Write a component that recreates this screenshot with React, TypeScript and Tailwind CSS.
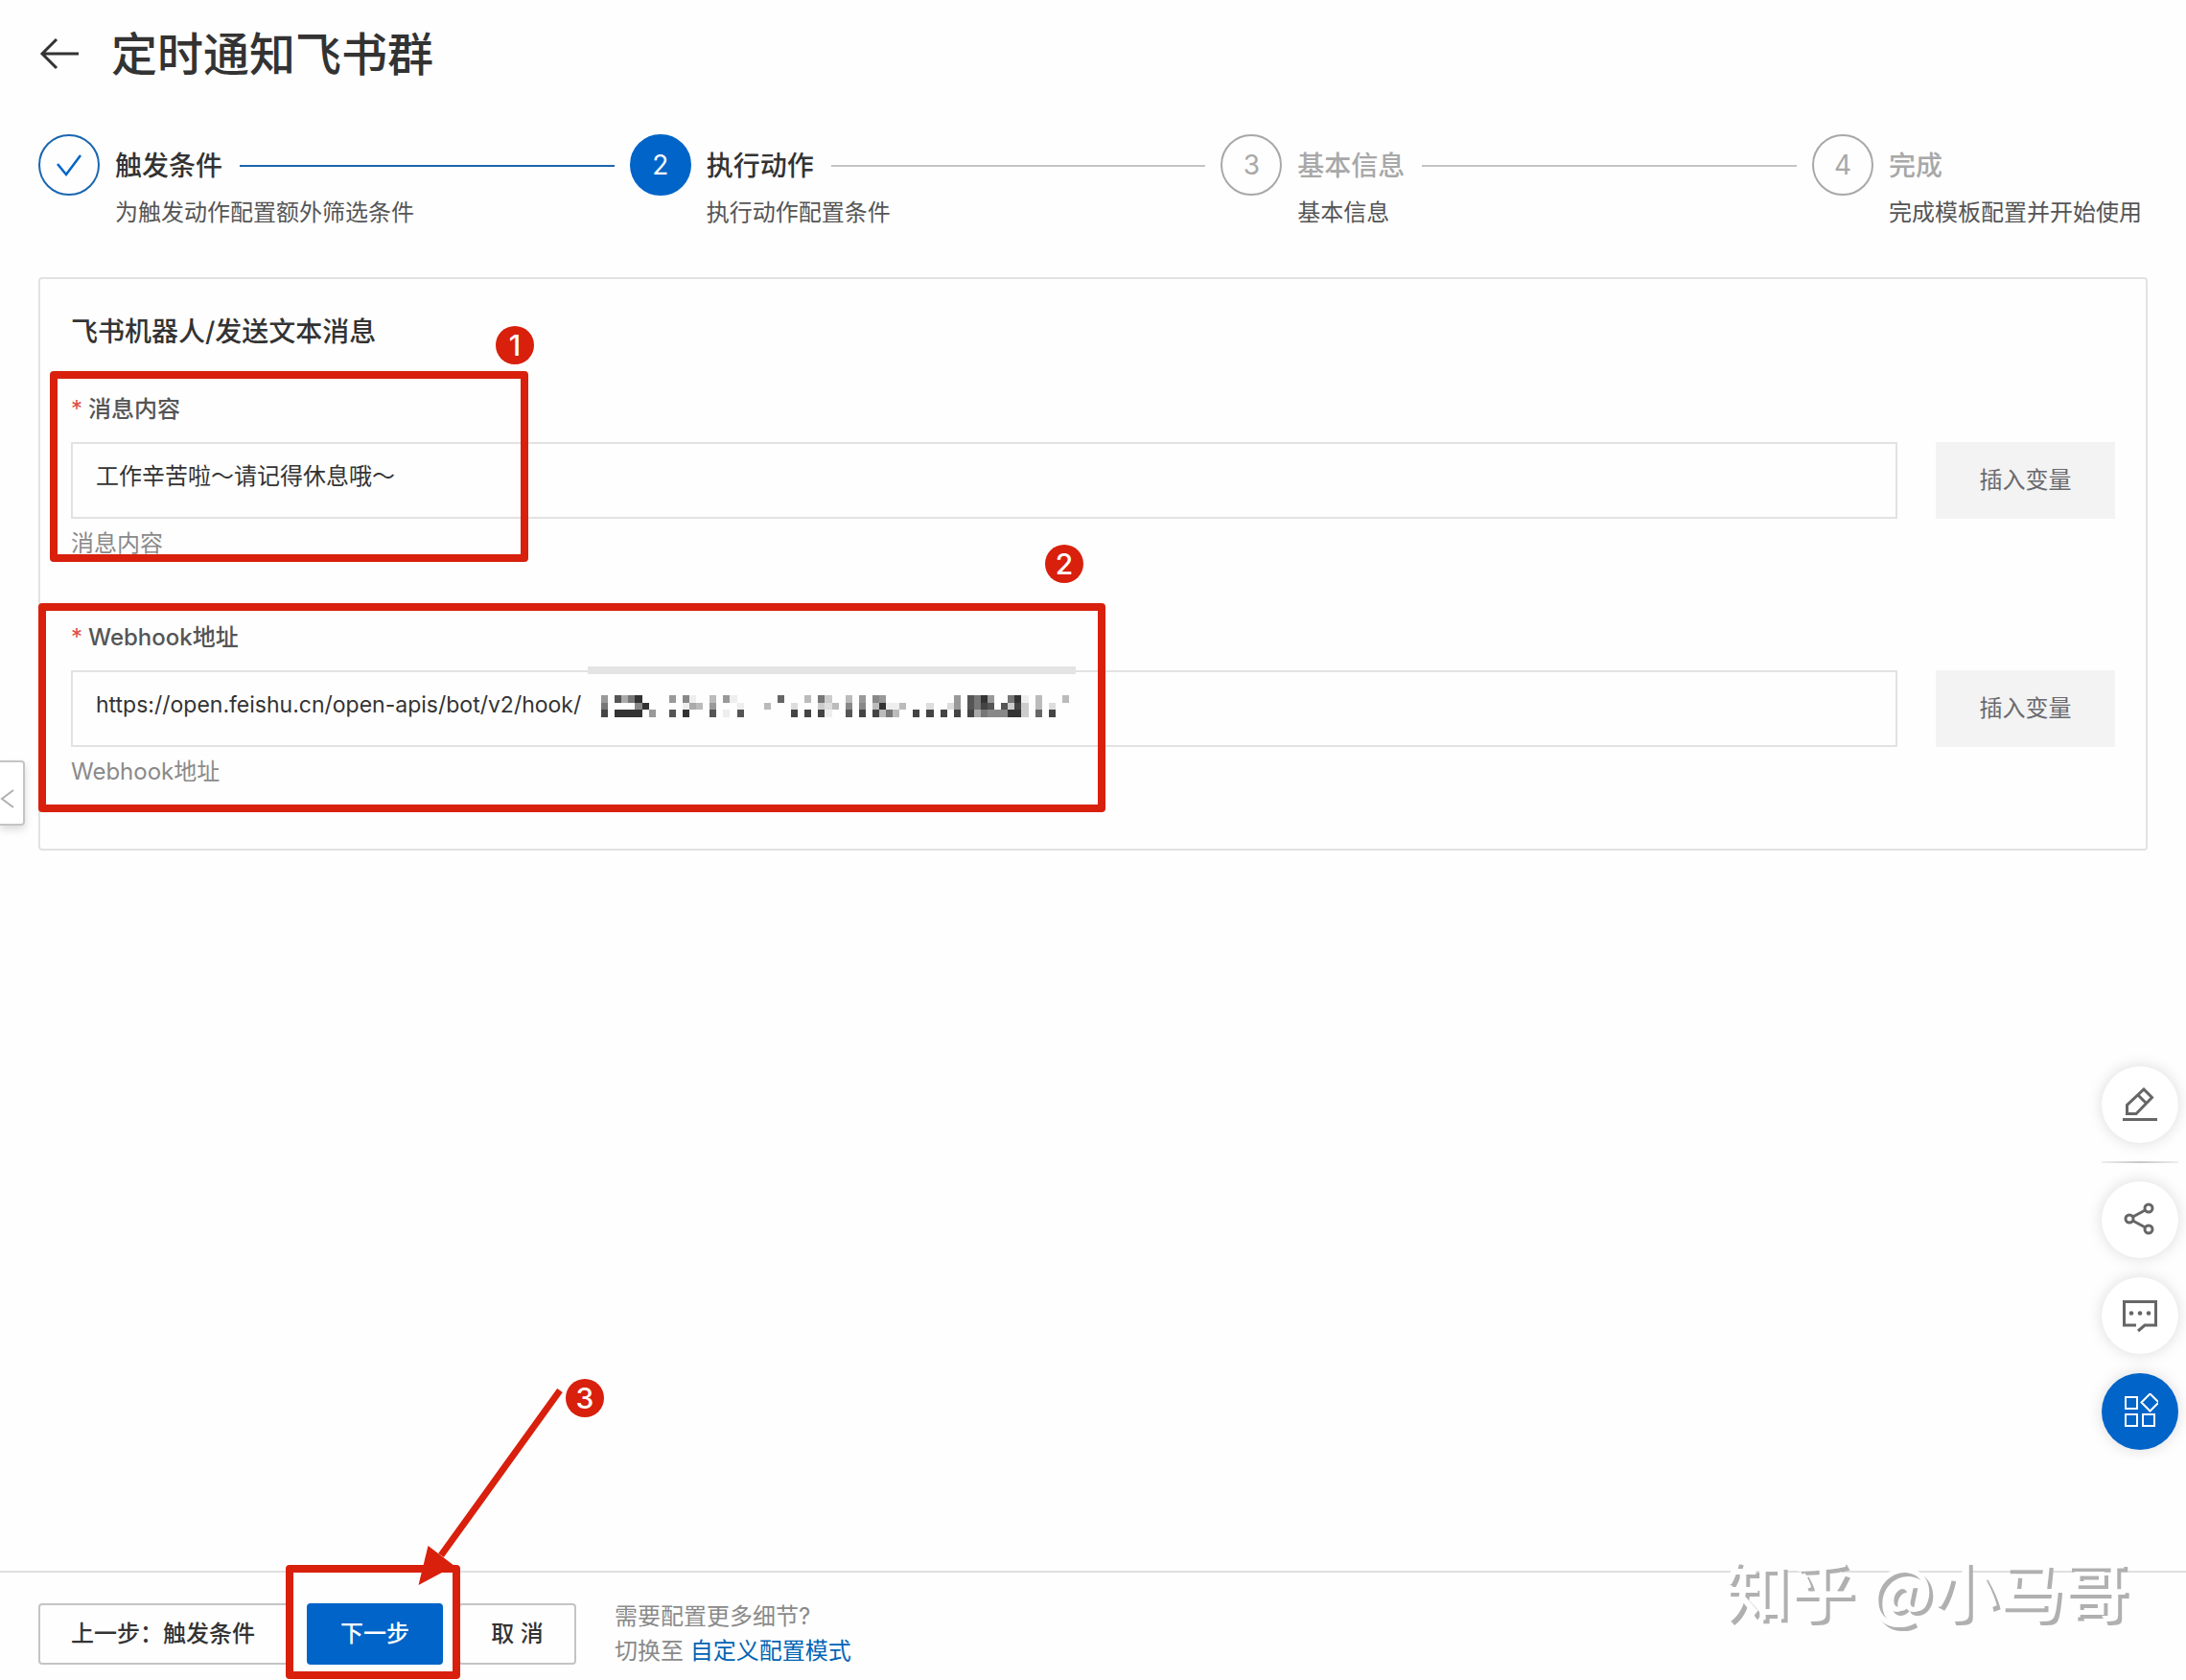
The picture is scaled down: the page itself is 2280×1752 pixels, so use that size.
import type { ReactNode } from "react";

type StepState = "done" | "active" | "todo";

const steps: { title: string; desc: string; state: StepState }[] = [
  { title: "触发条件", desc: "为触发动作配置额外筛选条件", state: "done" },
  { title: "执行动作", desc: "执行动作配置条件", state: "active" },
  { title: "基本信息", desc: "基本信息", state: "todo" },
  { title: "完成", desc: "完成模板配置并开始使用", state: "todo" },
];

const circleStyle: Record<StepState, string> = {
  done: "border-[#1a66b0] text-[#0064c8]",
  active: "border-[#0064c8] bg-[#0064c8] text-white",
  todo: "border-[#a8a8a8] text-[#a8a8a8]",
};

/* Columns of the mosaic: [column, top, middle, bottom]; each letter is a hex grey level. */
const mosaic: [number, string][] = [
  [2, "974"], [4, "5.3"], [5, "a.3"], [6, "7.3"], [7, "383"], [8, ".3."], [9, "..9"],
  [12, "9.5"], [14, "8e3"], [15, "ea."], [16, ".b."], [18, "b95"], [20, "9.e"], [21, "e.."],
  [22, ".e5"], [26, ".b."], [28, "6.."], [30, ".d4"], [32, "b.4"], [34, "7c4"], [35, "cde"],
  [36, ".b."], [38, "b85"], [40, "984"], [42, "8b4"], [43, "93b"], [44, ".e7"], [45, ".eb"],
  [46, ".b."], [48, "..4"], [50, ".d4"], [52, "..4"], [53, ".d."], [54, "994"], [56, "554"],
  [57, "77a"], [58, "347"], [59, "958"], [60, "..8"], [61, ".58"], [62, "7c3"], [63, "343"],
  [64, "ecc"], [66, "bb6"], [68, ".d4"], [70, "b.."],
];

function Mosaic() {
  return (
    <div className="absolute -top-1 left-[539px] h-[76px] w-[509px] border-t-8 border-[#e4e4e4] bg-[#fefefe]">
      <svg
        className="mt-[22px] h-[23px] w-full"
        viewBox="0 0 72 3"
        preserveAspectRatio="none"
        shapeRendering="crispEdges"
        aria-hidden="true"
      >
        {mosaic.flatMap(([col, levels]) =>
          levels.split("").map((l, row) =>
            l === "." ? null : (
              <rect key={`${col}-${row}`} x={col} y={row} width="1" height="1" fill={`#${l}${l}${l}`} />
            ),
          ),
        )}
      </svg>
    </div>
  );
}

function Badge({ n, className }: { n: number; className: string }) {
  return (
    <span
      className={`absolute flex size-10 items-center justify-center rounded-full bg-[#d8200d] text-[30px] leading-none font-medium text-white ${className}`}
    >
      {n}
    </span>
  );
}

function Field({
  id,
  label,
  value,
  textSize,
  overlay,
  children,
}: {
  id: string;
  label: string;
  value: string;
  textSize: string;
  overlay?: ReactNode;
  children: ReactNode;
}) {
  return (
    <div className="relative mb-16">
      <label htmlFor={id} className="flex h-9 items-center gap-1.5 text-[24px] leading-9 font-medium text-[#555]">
        <span className="text-[24px] leading-none font-normal text-[#e04a45]">*</span>
        {label}
      </label>
      <div className="mt-4 flex gap-10">
        <div className="relative flex-1">
          <textarea
            id={id}
            rows={1}
            defaultValue={value}
            className={`block h-20 w-full resize-none overflow-hidden border-2 border-[#e2e2e2] bg-[#fefefe] px-6 pt-4 leading-9 text-[#333] outline-none ${textSize}`}
          />
          {overlay}
        </div>
        <button type="button" className="h-20 w-[187px] bg-[#f3f3f3] text-[24px] text-[#6a6a6e]">
          插入变量
        </button>
      </div>
      <p className="mt-2.5 text-[24px] leading-8 text-[#8a8a8a]">{label}</p>
      {children}
    </div>
  );
}

const floatButton =
  "flex size-20 items-center justify-center rounded-full bg-white text-[#666] shadow-[0_0_16px_rgba(0,0,0,0.14)]";

export default function App() {
  return (
    <div className="relative flex min-h-screen flex-col overflow-hidden bg-[#fefefe] font-['Inter','Noto_Sans_CJK_SC',sans-serif] text-[#333]">
      <main className="flex-1 px-10 pt-6">
        <header className="flex items-center gap-8">
          <button type="button" aria-label="返回" className="size-11">
            <svg viewBox="0 0 44 44" fill="none" stroke="#333" strokeWidth="3" aria-hidden="true">
              <path d="M42 21H4M19 6 4 21l15 15" />
            </svg>
          </button>
          <h1 className="text-[48px] leading-[66px] font-medium">定时通知飞书群</h1>
        </header>

        <ol className="mt-[50px] flex gap-4">
          {steps.map((s, i) => {
            const last = i === steps.length - 1;
            return (
              <li key={s.title} className={last ? "flex w-[350px] gap-4" : "flex min-w-0 flex-1 gap-4"}>
                <span
                  className={`flex size-16 shrink-0 items-center justify-center rounded-full border-2 text-[28px] ${circleStyle[s.state]}`}
                >
                  {s.state === "done" ? (
                    <svg viewBox="0 0 28 28" className="size-7" fill="none" stroke="currentColor" strokeWidth="2.500" aria-label="已完成">
                      <path d="M2 13 11 24 26 4" />
                    </svg>
                  ) : (
                    i + 1
                  )}
                </span>
                <div className="min-w-0 flex-1">
                  <div className="flex h-[66px] items-center gap-[18px]">
                    <span
                      className={
                        s.state === "todo"
                          ? "shrink-0 text-[28px] font-medium text-[#a8a8a8]"
                          : "shrink-0 text-[28px] font-medium"
                      }
                    >
                      {s.title}
                    </span>
                    {!last && (
                      <span className={s.state === "done" ? "h-0.5 flex-1 bg-[#1a66b0]" : "h-0.5 flex-1 bg-[#c4c4c4]"} />
                    )}
                  </div>
                  <p className="text-[24px] leading-8 whitespace-nowrap text-[#555]">{s.desc}</p>
                </div>
              </li>
            );
          })}
        </ol>

        <section className="mt-[51px] rounded border-2 border-[#e2e2e2] px-8 pt-9">
          <h2 className="mb-11 text-[28px] leading-[38px] font-medium">飞书机器人/发送文本消息</h2>
          <Field id="message" label="消息内容" value="工作辛苦啦～请记得休息哦～" textSize="text-[24px]">
            <div className="pointer-events-none absolute -top-[22px] -left-[22px] h-[199px] w-[499px] rounded border-8 border-[#d8200d]" />
            <Badge n={1} className="-top-[69px] left-[443px]" />
          </Field>
          <Field
            id="webhook"
            label="Webhook地址"
            value="https://open.feishu.cn/open-apis/bot/v2/hook/"
            textSize="text-[23px]"
            overlay={<Mosaic />}
          >
            <div className="pointer-events-none absolute -top-[18px] -left-[34px] h-[218px] w-[1113px] rounded border-8 border-[#d8200d]" />
            <Badge n={2} className="-top-[79px] left-[1016px]" />
          </Field>
        </section>
      </main>

      <button
        type="button"
        aria-label="展开侧栏"
        className="absolute top-[793px] left-0 flex h-[68px] w-[26px] items-center rounded-r border-2 border-l-0 border-[#c4c4c4] bg-white shadow-[0_4px_8px_rgba(0,0,0,0.15)]"
      >
        <svg viewBox="0 0 16 20" className="mt-3 h-5 w-4" fill="none" stroke="#b0b0b0" strokeWidth="2" aria-hidden="true">
          <path d="M14 1 2 10l12 9" />
        </svg>
      </button>

      <aside className="absolute right-2 bottom-60 flex flex-col gap-5">
        <button type="button" aria-label="编辑" className={floatButton}>
          <svg viewBox="0 0 36 36" className="size-9" fill="none" stroke="currentColor" strokeWidth="3" aria-hidden="true">
            <path d="M0 33.500h36M4.500 27.500v-9L22 2l8.500 8.500L14 27.500zM16 8l8.500 8.500" />
          </svg>
        </button>
        <div className="-my-px h-0.5 bg-linear-to-r from-[#eee] via-[#c8c8c8] to-[#eee]" />
        <button type="button" aria-label="分享" className={floatButton}>
          <svg viewBox="0 0 36 36" className="size-9" fill="none" stroke="currentColor" strokeWidth="3" aria-hidden="true">
            <circle cx="7" cy="17" r="4" />
            <circle cx="27" cy="6" r="4" />
            <circle cx="27" cy="28" r="4" />
            <path d="m10.500 15 13-7M10.500 19l13 7" />
          </svg>
        </button>
        <button type="button" aria-label="评论" className={floatButton}>
          <svg viewBox="0 0 36 36" className="size-9" fill="none" stroke="currentColor" strokeWidth="3" aria-hidden="true">
            <path d="M14 28H1.500V3.500h33V28H23l-7 6" />
            <g fill="currentColor" stroke="none">
              <circle cx="9" cy="15.500" r="2.300" />
              <circle cx="18" cy="15.500" r="2.300" />
              <circle cx="27" cy="15.500" r="2.300" />
            </g>
          </svg>
        </button>
        <button
          type="button"
          aria-label="应用"
          className="flex size-20 items-center justify-center rounded-full bg-[#0064c8] text-white shadow-[0_0_16px_rgba(0,0,0,0.14)]"
        >
          <svg viewBox="0 0 38 38" className="size-[38px]" fill="none" stroke="currentColor" strokeWidth="2" aria-hidden="true">
            <path d="M4 4h12v12H4zM4 22h12v12H4zM22 22h12v12H22zM29.500 0.500l9 9-9 9-9-9z" />
          </svg>
        </button>
      </aside>

      <footer className="relative flex items-center gap-4 border-t-2 border-[#e0e0e0] px-10 pt-7 pb-3">
        <button
          type="button"
          className="h-16 w-[264px] rounded border-2 border-[#c4c4c4] pl-8 text-left text-[24px] font-medium whitespace-nowrap"
        >
          上一步：触发条件
        </button>
        <div className="relative">
          <button type="button" className="block h-16 w-[142px] rounded bg-[#0064c8] text-[24px] font-medium text-white">
            下一步
          </button>
          <div className="pointer-events-none absolute -top-10 -left-[22px] h-[119px] w-[182px] rounded border-8 border-[#d8200d]" />
          <svg
            viewBox="0 0 180 220"
            className="pointer-events-none absolute -top-[232px] left-[110px] h-[220px] w-[180px]"
            fill="#d8200d"
            aria-hidden="true"
          >
            <path d="M154 10 30 182" stroke="#d8200d" strokeWidth="7" />
            <path d="M16.500 172 6.500 213 44 193z" />
          </svg>
          <Badge n={3} className="-top-[234px] left-[270px]" />
        </div>
        <button type="button" className="h-16 w-[123px] rounded border-2 border-[#c4c4c4] text-[24px] font-medium">
          取 消
        </button>
        <p className="ml-6 text-[24px] leading-9 text-[#8a8a8a]">
          需要配置更多细节?
          <br />
          切换至{" "}
          <a href="#custom" className="text-[#0064b4]">
            自定义配置模式
          </a>
        </p>
        <div className="pointer-events-none absolute -top-8 right-[60px] font-['Noto_Sans_CJK_SC',sans-serif] text-[68px] leading-[96px] font-medium whitespace-nowrap text-[#fefefe] [text-shadow:4px_4px_0_#b0b0b0]">
          知乎 @小马哥
        </div>
      </footer>
    </div>
  );
}
